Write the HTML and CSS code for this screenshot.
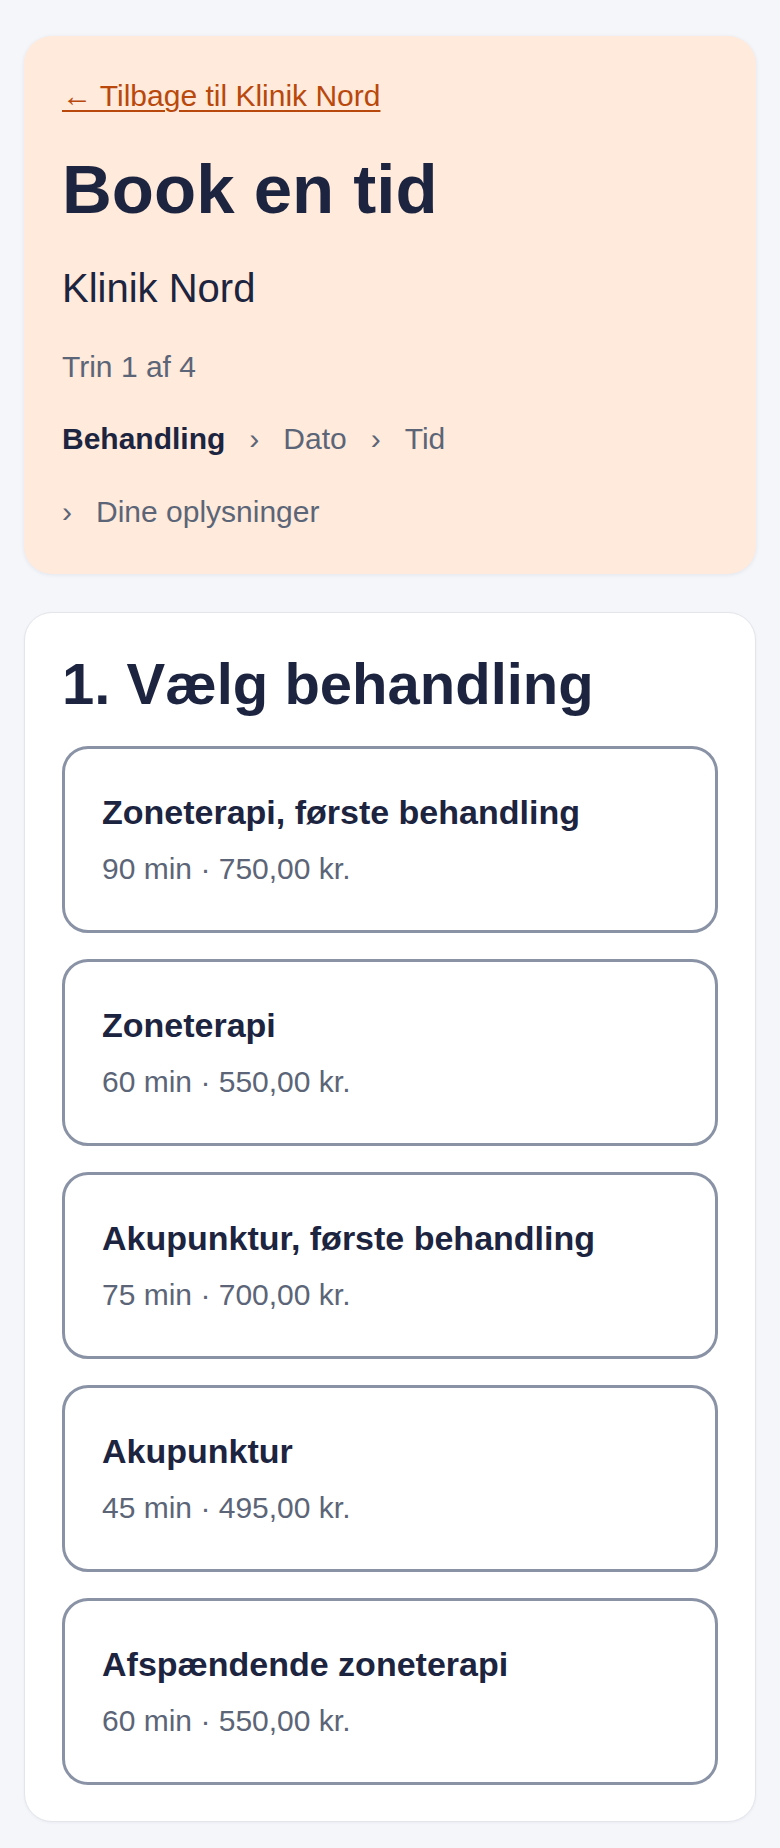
FILE: index.html
```html
<!DOCTYPE html>
<html lang="da">
<head>
  <meta charset="UTF-8">
  <meta name="viewport" content="width=device-width, initial-scale=1.0">
  <title>Book en tid - Klinik Nord</title>
  <link rel="stylesheet" href="styles.css">
</head>
<body>
  <main class="page">

    <!-- header med trin -->
    <header class="booking-head">
      <a class="back-link" href="#">← Tilbage til Klinik Nord</a>
      <h1 class="booking-title">Book en tid</h1>
      <p class="clinic-name">Klinik Nord</p>
      <p class="step-count">Trin 1 af 4</p>
      <ol class="steps">
        <li class="step active">Behandling</li>
        <li class="step">Dato</li>
        <li class="step">Tid</li>
        <li class="step">Dine oplysninger</li>
      </ol>
    </header>

    <section class="panel">
      <h2 class="panel-title">1. Vælg behandling</h2>
      <div class="service-list">
        <button class="service" type="button">
          <span class="service-name">Zoneterapi, første behandling</span>
          <span class="service-meta">90 min · 750,00 kr.</span>
        </button>
        <button class="service" type="button">
          <span class="service-name">Zoneterapi</span>
          <span class="service-meta">60 min · 550,00 kr.</span>
        </button>
        <button class="service" type="button">
          <span class="service-name">Akupunktur, første behandling</span>
          <span class="service-meta">75 min · 700,00 kr.</span>
        </button>
        <button class="service" type="button">
          <span class="service-name">Akupunktur</span>
          <span class="service-meta">45 min · 495,00 kr.</span>
        </button>
        <button class="service" type="button">
          <span class="service-name">Afspændende zoneterapi</span>
          <span class="service-meta">60 min · 550,00 kr.</span>
        </button>
      </div>
    </section>

  </main>
</body>
</html>
```

FILE: styles.css
```css
body {
  margin: 0;
  background-color: #f4f6fa;
  font-family: "Liberation Sans", Arial, sans-serif;
  color: #1c2440;
}

.page {
  padding: 36px 24px 26px;
}

/* header */
.booking-head {
  background-color: #ffeadb;
  border-radius: 28px;
  padding: 41px 38px 44px;
  box-shadow: 0 1px 4px rgba(30, 40, 70, 0.08);
}

.back-link {
  display: inline-block;
  font-size: 30px;
  line-height: 37.5px;
  color: #b9480c;
  text-decoration: underline;
  text-underline-offset: 4px;
  text-decoration-thickness: 2px;
}

.booking-title {
  margin: 37px 0 0;
  font-size: 69px;
  line-height: 75px;
  font-weight: 700;
  color: #1c2440;
}

.clinic-name {
  margin: 37px 0 0;
  font-size: 40px;
  line-height: 48.75px;
}

.step-count {
  margin: 36px 0 0;
  font-size: 30px;
  line-height: 37.5px;
  color: #5b6577;
}

.steps {
  list-style: none;
  margin: 34.5px 0 0;
  padding: 0;
  display: flex;
  flex-wrap: wrap;
  column-gap: 24px;
  row-gap: 35px;
  font-size: 30px;
  line-height: 37.5px;
  color: #5b6577;
}

.step + .step::before {
  content: "›";
  margin-right: 24px;
}

.step.active {
  font-weight: 700;
  color: #1c2440;
}

/* behandlinger */
.panel {
  margin-top: 38px;
  background-color: #fff;
  border: 1px solid #e3e5ea;
  border-radius: 28px;
  padding: 36px 37px;
  box-shadow: 0 1px 3px rgba(30, 40, 70, 0.05);
}

.panel-title {
  margin: 3px 0 0;
  font-size: 58px;
  line-height: 63px;
  font-weight: 700;
}

.service-list {
  margin-top: 31px;
  display: flex;
  flex-direction: column;
  gap: 26px;
}

.service {
  display: block;
  width: 100%;
  text-align: left;
  background-color: #fff;
  border: 3px solid #8a93a6;
  border-radius: 26px;
  padding: 41.5px 37px 43px;
  font-family: inherit;
  cursor: pointer;
}

.service-name {
  display: block;
  font-size: 34px;
  line-height: 42.5px;
  font-weight: 700;
  color: #1c2440;
}

.service-meta {
  display: block;
  margin-top: 16.5px;
  font-size: 30px;
  line-height: 37.5px;
  color: #5b6577;
}
```
